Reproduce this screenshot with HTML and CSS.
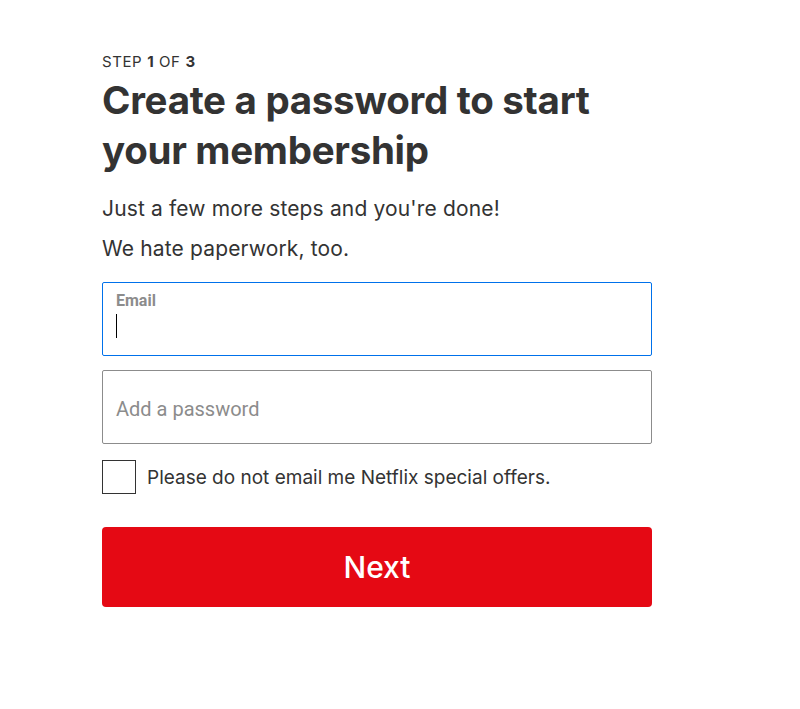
FILE: index.html
```html
<!DOCTYPE html>
<html lang="en">
<head>
<meta charset="utf-8">
<title>Create a password</title>
<link rel="stylesheet" href="styles.css">
</head>
<body>
<main class="page">
  <div class="form">
    <div class="step">STEP <b>1</b> OF <b>3</b></div>
    <h1 class="title">Create a password to start your membership</h1>
    <p class="lead">Just a few more steps and you're done!</p>
    <p class="lead">We hate paperwork, too.</p>
    <div class="field focused">
      <span class="field-label">Email</span>
      <span class="caret"></span>
    </div>
    <div class="field">
      <span class="placeholder">Add a password</span>
    </div>
    <label class="check">
      <span class="box"></span>
      <span class="check-text">Please do not email me Netflix special offers.</span>
    </label>
    <button class="next" type="button">Next</button>
  </div>
</main>
</body>
</html>
```

FILE: styles.css
```css
* { box-sizing: border-box; }
html, body { margin: 0; padding: 0; background: #fff; }
body { font-family: Inter, "Noto Sans", sans-serif; color: #333; }
.page { padding: 53px 0 0 102px; }
.form { width: 550px; display: flex; flex-direction: column; }
.step { font-size: 15px; line-height: 17px; color: #333; letter-spacing: 0.6px; }
.step b { font-weight: 700; }
.title { margin: 5px 0 0; font-size: 38.5px; line-height: 50px; font-weight: 700; color: #333; letter-spacing: -0.3px; width: 500px; }
.lead { margin: 0; font-size: 21px; line-height: 39px; color: #333; letter-spacing: 0.15px; }
.lead:first-of-type { margin-top: 14px; }
.lead + .lead { margin-top: 1px; }
.field { margin-top: 14px; height: 74px; border: 1px solid #8c8c8c; border-radius: 2px; position: relative; padding: 0 13px; display: flex; flex-direction: column; justify-content: center; }
.lead + .field { margin-top: 14px; }
.field.focused { border-color: #0071eb; justify-content: flex-start; padding-top: 9px; }
.field-label { font-family: Roboto, "Liberation Sans", sans-serif; font-weight: 700; font-size: 16px; line-height: 18px; color: #8c8c8c; }
.caret { display: block; width: 1px; height: 24px; background: #000; margin-top: 4px; }
.placeholder { font-family: Roboto, "Liberation Sans", sans-serif; font-size: 20px; color: #8c8c8c; padding-top: 3px; }
.check { display: flex; align-items: center; margin-top: 16px; gap: 11px; }
.box { width: 34px; height: 34px; border: 1px solid #333; flex: none; }
.check-text { font-size: 19px; color: #333; }
.next { margin-top: 33px; height: 80px; border: 0; border-radius: 4px; background: #e50914; color: #fff; font-family: Inter, "Noto Sans", sans-serif; font-size: 30px; font-weight: 500; cursor: pointer; }
```
